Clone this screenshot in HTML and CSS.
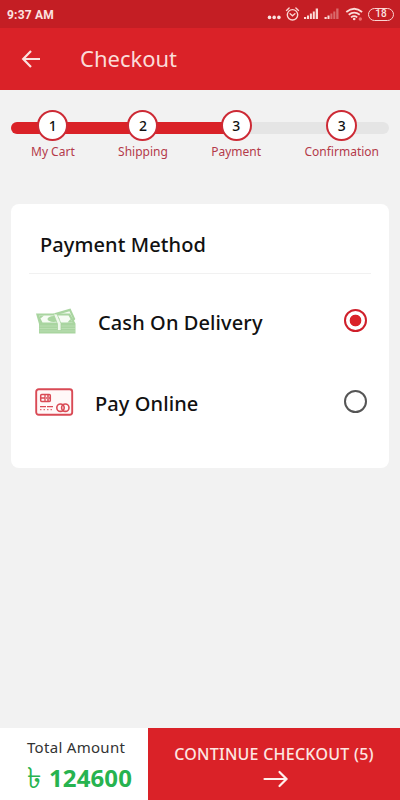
FILE: index.html
```html
<!DOCTYPE html>
<html lang="en">
<head>
  <meta charset="UTF-8" />
  <meta name="viewport" content="width=device-width, initial-scale=1.0"/>
  <title>Checkout</title>
  <link rel="stylesheet" href="styles.css">
</head>
<body>

  <div class="status-bar">
    <span class="time">9:37 AM</span>
    <!-- dots, alarm, signal x2, wifi -->
    <svg class="status-icons" width="96" height="20" viewBox="0 0 96 20">
      <g fill="#fbe3e0">
        <circle cx="2.5" cy="13.4" r="1.8"/>
        <circle cx="7.2" cy="13.4" r="1.8"/>
        <circle cx="11.9" cy="13.4" r="1.8"/>
      </g>
      <g fill="none" stroke="#fbd5d2" stroke-width="1.4" stroke-linecap="round">
        <circle cx="25.500" cy="10.800" r="5.2"/>
        <path d="M19.500 6.400l2.600-2.400M31.500 6.400l-2.600-2.400M23.100 9.800l2.400 2 2.400-2"/>
      </g>
      <g fill="#fbdcd8">
        <path d="M37 15v-2h2.200v2zM40 15v-3.600h2v3.600zM42.900 15v-5.400h2v5.400zM45.800 15v-7.600h2v7.600zM48.700 15V4.500h2.300V15z"/>
        <path d="M57.500 15v-2h2.200v2zM60.500 15v-3.600h2v3.600z"/>
        <path d="M63.400 15v-5.400h2v5.400zM66.300 15v-7.600h2v7.600zM69.200 15V4.500h2.300V15z" opacity=".4"/>
      </g>
      <g fill="none" stroke="#fbdcd8" stroke-width="1.8">
        <path d="M79.300 8q7.900-6.600 15.800 0M81.700 10.800q5.500-4.400 11 0M84 13.400q3.200-2.400 6.200 0"/>
      </g>
      <circle cx="87.200" cy="15" r="1.300" fill="#fbdcd8"/>
      <circle cx="93.300" cy="15" r="1.700" fill="#ee6f70"/>
    </svg>
    <span class="battery">18</span>
  </div>

  <header class="header">
    <svg class="back" width="20" height="20" viewBox="0 0 20 20">
      <path d="M19 10H2.500M10 2L2.200 10l7.800 8"/>
    </svg>
    <h1>Checkout</h1>
  </header>

  <div class="progress">
    <div class="track"><div class="track-fill"></div></div>
    <div class="steps">
      <div class="step"><span class="circle">1</span><span class="label">My Cart</span></div>
      <div class="step"><span class="circle">2</span><span class="label">Shipping</span></div>
      <div class="step"><span class="circle">3</span><span class="label">Payment</span></div>
      <div class="step"><span class="circle">3</span><span class="label">Confirmation</span></div>
    </div>
  </div>

  <main class="card">
    <h2>Payment Method</h2>

    <div class="option selected">
      <svg class="option-icon" width="42" height="28" viewBox="0 0 42 28">
        <!-- back note, stack, front note, band -->
        <path d="M20 6L35.500 1.500l4.800 10.500-3 4H20z" fill="#a9d5a0"/>
        <path d="M25 7l9.500-2.800 3.200 7.300-2 1z" fill="#f4fbf2"/>
        <path d="M1 6.500h34l5.500 10V26.500H4V17z" fill="#a9d5a0"/>
        <path d="M4 8.500h29.500l4 7H7.500z" fill="#f6fcf4"/>
        <path d="M4 8.500h5l-3.500 3zM37.500 15.500h-5l3-3.500z" fill="#a9d5a0"/>
        <ellipse cx="18.500" cy="12" rx="6" ry="3" fill="#a9d5a0"/>
        <path d="M4.500 19h35.500M4.500 21.500h35.500M4.500 24h35.500" stroke="#c2e3ba" stroke-width=".7"/>
        <path d="M18.500 7h3.500l4 9.500v7h-3.500V17z" fill="#eff8ec" stroke="#a3d19a" stroke-width=".7"/>
      </svg>
      <span class="option-name">Cash On Delivery</span>
      <span class="radio"></span>
    </div>

    <div class="option">
      <svg class="option-icon" width="39" height="28" viewBox="0 0 39 28">
        <g fill="none" stroke="#d94a55">
          <rect x="1.200" y="1.200" width="36" height="25.600" rx="2.500" stroke-width="1.900" fill="#fff8f8"/>
          <rect x="5.700" y="6.500" width="9.600" height="7" rx="1" stroke-width="1.500"/>
          <path d="M5.500 10h4M10 6.500v7M11 10h4M12 8h2M12 12h2" stroke-width="1.300"/>
          <path d="M5 18.700h14" stroke-width="1.200" stroke-dasharray="6 1"/>
          <path d="M5 21.700h14" stroke-width="1" stroke-dasharray="1.500 2"/>
          <circle cx="25.500" cy="19.700" r="3.700" stroke-width="1.600"/>
          <circle cx="30.300" cy="19.700" r="3.700" stroke-width="1.600"/>
        </g>
      </svg>
      <span class="option-name">Pay Online</span>
      <span class="radio"></span>
    </div>
  </main>

  <footer class="footer">
    <div class="total">
      <span class="total-label">Total Amount</span>
      <span class="amount"><span class="taka">৳</span>124600</span>
    </div>
    <div class="continue">
      <span>CONTINUE CHECKOUT (5)</span>
      <svg width="26" height="18" viewBox="0 0 26 18">
        <path d="M1.500 9h22M16.500 2l7 7-7 7"/>
      </svg>
    </div>
  </footer>

</body>
</html>
```
FILE: styles.css
```css
* {
  box-sizing: border-box;
}
body {
  margin: 0;
  height: 100vh;
  display: flex;
  flex-direction: column;
  font-family: "Noto Sans", "Open Sans", sans-serif;
  background: #f2f2f2;
  color: #111;
}

.status-bar {
  height: 28px;
  padding: 0 6px 0 7px;
  display: flex;
  align-items: center;
  background: #c41e24;
  color: #fbe3e0;
  font-family: Roboto, sans-serif;
}
.time {
  font-size: 12px;
  font-weight: 700;
  letter-spacing: 0.2px;
  padding-top: 1px;
}
.status-icons {
  margin-left: auto;
  margin-right: 5px;
}
.battery {
  display: flex;
  align-items: center;
  justify-content: center;
  width: 26px;
  height: 13px;
  border: 1.5px solid #fbd5d2;
  border-radius: 7px;
  font-size: 10px;
  font-weight: 500;
  line-height: 10px;
}

.header {
  height: 62px;
  padding-left: 21px;
  display: flex;
  align-items: center;
  gap: 39px;
  background: #da2228;
}
.header h1 {
  margin: 0 0 2px;
  font-size: 22px;
  font-weight: 400;
  line-height: 30px;
  color: #fbdcd8;
}
.back path {
  fill: none;
  stroke: #fbe3e0;
  stroke-width: 2.2;
}

/* Steps are stacked over the track in the same grid cell */
.progress {
  display: grid;
  margin: 20px 11px 0;
}
.track,
.steps {
  grid-area: 1 / 1;
}
.track {
  height: 12px;
  margin-top: 12px;
  border-radius: 6px;
  background: #e5e5e5;
  overflow: hidden;
}
.track-fill {
  width: 60%;
  height: 100%;
  background: #da2228;
}
.steps {
  display: flex;
  justify-content: space-between;
  padding: 0 10px 0 20px;
}
.step {
  display: flex;
  flex-direction: column;
  align-items: center;
}
.circle {
  width: 31px;
  height: 31px;
  border: 2px solid #cd2a35;
  border-radius: 50%;
  background: #fff;
  font-size: 14px;
  font-weight: 500;
  line-height: 27px;
  text-align: center;
}
.label {
  margin-top: 3px;
  font-size: 12px;
  line-height: 16px;
  color: #b43a4a;
}

.card {
  height: 264px;
  margin: 44px 11px 0;
  padding: 0 18px;
  border-radius: 8px;
  background: #fff;
}
.card h2 {
  margin: 0 0 7px;
  height: 70px;
  padding: 27px 0 0 11px;
  border-bottom: 1px solid #f1f1f1;
  font-size: 20px;
  font-weight: 500;
  letter-spacing: 0.1px;
  line-height: 28px;
}
.option {
  height: 81px;
  padding: 0 4px 0 6px;
  display: flex;
  align-items: center;
}
.option-icon {
  margin: 0 21px 1px 0;
}
.option-name {
  padding-top: 2px;
  font-size: 20px;
  font-weight: 500;
  letter-spacing: 0.1px;
}
.radio {
  width: 23px;
  height: 23px;
  margin: 0 0 2px auto;
  border: 2px solid #555;
  border-radius: 50%;
}
.selected .radio {
  border-color: #cf1f2a;
  background: radial-gradient(circle, #da2228 5.5px, #fff 6.2px);
}

.footer {
  height: 72px;
  margin-top: auto;
  display: flex;
}
.total {
  width: 148px;
  padding: 8px 0 0 27px;
  display: flex;
  flex-direction: column;
  background: #fff;
}
.total-label {
  font-size: 15px;
  letter-spacing: 0.3px;
  line-height: 22px;
  color: #333;
}
.amount {
  display: flex;
  align-items: center;
  height: 38px;
  font-size: 24px;
  font-weight: 700;
  letter-spacing: 0.1px;
  color: #27b34f;
  white-space: nowrap;
}
.taka {
  width: 22px;
  font-size: 29px;
  font-weight: 500;
  line-height: 38px;
}
.continue {
  flex: 1;
  padding-top: 14px;
  display: flex;
  flex-direction: column;
  align-items: center;
  background: #da2228;
  color: #fde6e2;
  font-size: 16px;
  font-weight: 500;
  letter-spacing: 0.25px;
  line-height: 24px;
}
.continue svg {
  margin: 4px 0 0 4px;
}
.continue path {
  fill: none;
  stroke: #fff0ec;
  stroke-width: 2.2;
  stroke-linecap: round;
}
```
